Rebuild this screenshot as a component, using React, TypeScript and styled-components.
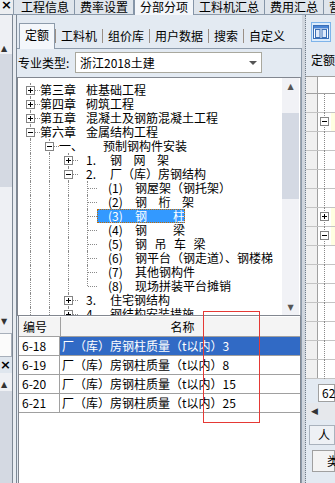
import styled, { createGlobalStyle } from 'styled-components';

const GlobalStyle = createGlobalStyle`
  html, body {
    margin: 0;
    padding: 0;
  }
  body {
    font-family: 'Noto Sans CJK SC', 'Noto Sans', sans-serif;
    font-size: 12px;
    color: #000;
  }
`;

type TreeItem = {
  level: number;
  box?: 'plus' | 'minus';
  num: string;
  text: string;
  gap?: number;
  last?: boolean;
  selected?: boolean;
};

const TREE: TreeItem[] = [
  { level: 1, box: 'plus', num: '第三章', text: '桩基础工程' },
  { level: 1, box: 'plus', num: '第四章', text: '砌筑工程' },
  { level: 1, box: 'plus', num: '第五章', text: '混凝土及钢筋混凝土工程' },
  { level: 1, box: 'minus', num: '第六章', text: '金属结构工程' },
  { level: 2, box: 'minus', num: '一、', text: '预制钢构件安装' },
  { level: 3, box: 'plus', num: '1.', text: '钢网架', gap: 11.5 },
  { level: 3, box: 'minus', num: '2.', text: '厂（库）房钢结构' },
  { level: 4, num: '(1)', text: '钢屋架（钢托架）' },
  { level: 4, num: '(2)', text: '钢桁架', gap: 11.5 },
  { level: 4, num: '(3)', text: '钢柱', gap: 26, selected: true },
  { level: 4, num: '(4)', text: '钢梁', gap: 26 },
  { level: 4, num: '(5)', text: '钢吊车梁', gap: 7.5 },
  { level: 4, num: '(6)', text: '钢平台（钢走道）、钢楼梯' },
  { level: 4, num: '(7)', text: '其他钢构件' },
  { level: 4, num: '(8)', text: '现场拼装平台摊销', last: true },
  { level: 3, box: 'plus', num: '3.', text: '住宅钢结构' },
  { level: 3, box: 'plus', num: '4.', text: '钢结构安装措施' },
];

// where the number and the title start, per level (relative to the label box)
const NUM_PAD: Record<number, number> = { 1: 0, 2: 0, 3: 8, 4: 11 };
const NUM_WIDTH: Record<number, number> = { 1: 46, 2: 44, 3: 24, 4: 27 };

const ROWS = [
  { code: '6-18', name: '厂（库）房钢柱质量（t以内）3', selected: true },
  { code: '6-19', name: '厂（库）房钢柱质量（t以内）8' },
  { code: '6-20', name: '厂（库）房钢柱质量（t以内）15' },
  { code: '6-21', name: '厂（库）房钢柱质量（t以内）25' },
];

const TOP_TABS = ['工程信息', '费率设置', '分部分项', '工料机汇总', '费用汇总', '营'];
const INNER_TABS = ['定额', '工料机', '组价库', '用户数据', '搜索', '自定义'];

// right panel grid rows: what sits in the tree column
const SIDE_GRID: ('line' | 'plus' | 'minus')[] = [
  'line', 'minus', 'line', 'line', 'line', 'line', 'plus', 'minus',
  'line', 'line', 'line', 'line', 'line', 'line', 'line',
];

const Chars = ({ text, gap }: { text: string; gap?: number }) => {
  if (!gap) return <span>{text}</span>;
  return (
    <Spread $gap={gap}>
      {text.split('').map((c, i) => (
        <span key={i}>{c}</span>
      ))}
    </Spread>
  );
};

const PaneIcon = () => (
  <svg width="16" height="14" viewBox="0 0 16 14">
    <rect x="0.5" y="0.5" width="15" height="13" fill="#fff" stroke="#3b6fb6" />
    <rect x="1" y="1" width="14" height="2.5" fill="#4a86d6" />
    <rect x="2.5" y="4.5" width="4.5" height="8" fill="#dfeafa" stroke="#3b6fb6" />
    <rect x="9" y="4.5" width="4.5" height="8" fill="#dfeafa" stroke="#3b6fb6" />
  </svg>
);

export default function App() {
  return (
    <Screen>
      <GlobalStyle />
      <TopBar>
        <CornerClose>×</CornerClose>
        <TopTabs>
          {TOP_TABS.map((t) => (
            <TopTab key={t} $active={t === '分部分项'}>
              {t}
            </TopTab>
          ))}
        </TopTabs>
      </TopBar>

      <Workspace>
        <SideStrip>
          <StripBlank $h={29} />
          <StripArrow $h={10}>▲</StripArrow>
          <StripThumb $h={133} />
          <StripTrack $h={129} />
          <StripArrow $h={12}>▼</StripArrow>
          <StripBlank $h={5} />
          <StripBox />
          <StripHead>×</StripHead>
          <StripBlank $h={6} />
          <StripArrow $h={12}>▲</StripArrow>
          <StripThumb $h={120} />
        </SideStrip>
        <Splitter />

        <CenterPanel>
          <InnerTabs>
            {INNER_TABS.map((t) => (
              <InnerTab key={t} $active={t === '定额'}>
                {t}
              </InnerTab>
            ))}
          </InnerTabs>
          <ContentBox>
            <TypeRow>
              <TypeLabel>专业类型:</TypeLabel>
              <Combo>
                <span>浙江2018土建</span>
                <ComboArrow />
              </Combo>
            </TypeRow>

            <TreeBox>
              <TreeList>
                {TREE.map((n, i) => (
                  <TreeRow key={i}>
                    {Array.from({ length: n.level - 1 }).map((_, g) => (
                      <Guide key={g} />
                    ))}
                    <Joint $last={n.last}>
                      {n.box && <Expander $plus={n.box === 'plus'} />}
                    </Joint>
                    <Label $selected={n.selected} $pad={NUM_PAD[n.level]}>
                      <Num $w={NUM_WIDTH[n.level]}>{n.num}</Num>
                      <Chars text={n.text} gap={n.gap} />
                    </Label>
                  </TreeRow>
                ))}
              </TreeList>
              <VScroll>
                <ScrollArrow>▲</ScrollArrow>
                <ScrollTrack $h={18} />
                <ScrollThumb $h={86} />
                <ScrollTrack $h={100} />
                <ScrollArrow>▼</ScrollArrow>
              </VScroll>
            </TreeBox>

            <Table>
              <HeadRow>
                <HeadCell>编号</HeadCell>
                <HeadCell $center>名称</HeadCell>
              </HeadRow>
              {ROWS.map((r) => (
                <BodyRow key={r.code}>
                  <CodeCell>{r.code}</CodeCell>
                  <NameCell $selected={r.selected}>{r.name}</NameCell>
                </BodyRow>
              ))}
            </Table>
          </ContentBox>
        </CenterPanel>

        <RightSplitter />

        <RightPanel>
          <ToolRow>
            <ToolButton>
              <PaneIcon />
            </ToolButton>
          </ToolRow>
          <SideTitle>定额</SideTitle>
          <SideGrid>
            <SideHead>
              <RowHeadCell />
              <SideCell />
            </SideHead>
            {SIDE_GRID.map((kind, i) => (
              <SideRow key={i}>
                <RowHeadCell />
                <SideCell $mark={kind !== 'line'}>
                  <SideLine />
                  {kind !== 'line' && <SideExpander $plus={kind === 'plus'} />}
                </SideCell>
              </SideRow>
            ))}
          </SideGrid>
          <NumBox>62</NumBox>
          <HScroll>
            <span>◀</span>
          </HScroll>
          <SideButton>人</SideButton>
          <SideHeadCell>类</SideHeadCell>
        </RightPanel>
      </Workspace>

      <RedMark />
    </Screen>
  );
}

// ROOT
const Screen = styled.div`
  position: relative;
  width: 335px;
  height: 483px;
  overflow: hidden;
  display: flex;
  flex-direction: column;
  background-color: #dde4ec;
`;

// TOP TABS
const TopBar = styled.div`
  display: flex;
  height: 15px;
  flex-shrink: 0;
  border-bottom: 1px solid #8d9bab;
  box-sizing: border-box;
`;

const CornerClose = styled.div`
  width: 14px;
  flex-shrink: 0;
  font-family: 'DejaVu Sans', sans-serif;
  font-size: 13px;
  font-weight: bold;
  line-height: 9px;
  padding-left: 1px;
  box-sizing: border-box;
  background-color: #eceef1;
  border-right: 1px solid #8d9bab;
`;

const TopTabs = styled.div`
  display: flex;
  padding-left: 2px;
`;

const TopTab = styled.div<{ $active?: boolean }>`
  height: 14px;
  line-height: 14px;
  padding: 0 5px;
  white-space: nowrap;
  border-right: 1px solid #8595a8;
  background-color: ${(p) => (p.$active ? '#f3f6fa' : '#dfe5ec')};
  ${(p) => p.$active && 'height: 15px; border-left: 1px solid #8595a8;'}
`;

// LAYOUT
const Workspace = styled.div`
  flex: 1;
  min-height: 0;
  display: flex;
`;

// LEFT STRIP
const SideStrip = styled.div`
  width: 12px;
  flex-shrink: 0;
  display: flex;
  flex-direction: column;
  background-color: #eef0f4;
`;

const StripBlank = styled.div<{ $h: number }>`
  height: ${(p) => p.$h}px;
  flex-shrink: 0;
`;

const StripArrow = styled.div<{ $h: number }>`
  height: ${(p) => p.$h}px;
  flex-shrink: 0;
  font-size: 8px;
  line-height: ${(p) => p.$h}px;
  padding-left: 1px;
  color: #333;
  font-family: 'DejaVu Sans', sans-serif;
`;

const StripThumb = styled.div<{ $h: number }>`
  height: ${(p) => p.$h}px;
  flex-shrink: 0;
  background-color: #d4d9e2;
`;

const StripTrack = styled.div<{ $h: number }>`
  height: ${(p) => p.$h}px;
  flex-shrink: 0;
  background-color: #eef0f4;
`;

const StripBox = styled.div`
  height: 22px;
  flex-shrink: 0;
  background-color: #fbfbfb;
  border: 1px solid #a7afba;
  border-left: none;
`;

const StripHead = styled.div`
  height: 16px;
  flex-shrink: 0;
  font-family: 'DejaVu Sans', sans-serif;
  font-weight: bold;
  font-size: 13px;
  line-height: 16px;
  background-color: #dfe6ee;
`;

const Splitter = styled.div`
  width: 5px;
  flex-shrink: 0;
  border-left: 1px solid #7d8894;
  border-right: 1px solid #7d8894;
  box-sizing: border-box;
  background-color: #e8ecf1;
`;

// CENTER PANEL
const CenterPanel = styled.div`
  width: 285px;
  flex-shrink: 0;
  display: flex;
  flex-direction: column;
  background-color: #e3eaf2;
`;

const InnerTabs = styled.div`
  display: flex;
  align-items: flex-end;
  height: 33px;
  flex-shrink: 0;
  padding-left: 2px;
`;

const InnerTab = styled.div<{ $active?: boolean }>`
  white-space: nowrap;
  padding: 0 5px;
  height: ${(p) => (p.$active ? '26px' : '14px')};
  line-height: ${(p) => (p.$active ? '22px' : '14px')};
  box-sizing: border-box;
  margin-bottom: ${(p) => (p.$active ? '-1px' : '5px')};
  background-color: ${(p) => (p.$active ? '#f4f7fb' : 'transparent')};
  border: ${(p) => (p.$active ? '1px solid #8d9bab' : 'none')};
  border-bottom: none;
  position: relative;
  z-index: 1;
  & + & {
    border-left: ${(p) => (p.$active ? '1px solid #8d9bab' : '1px solid #9a8f86')};
  }
`;

const ContentBox = styled.div`
  flex: 1;
  min-height: 0;
  display: flex;
  flex-direction: column;
  border-top: 1px solid #8d9bab;
  border-right: 1px solid #8d9bab;
  background-color: #e3eaf2;
`;

const TypeRow = styled.div`
  display: flex;
  align-items: center;
  height: 21px;
  margin: 3px 0 4px 1px;
`;

const TypeLabel = styled.span`
  width: 57px;
  flex-shrink: 0;
`;

const Combo = styled.div`
  position: relative;
  width: 187px;
  height: 21px;
  box-sizing: border-box;
  border: 1px solid #a9a89e;
  background-color: #fff;
  padding-left: 4px;
  line-height: 19px;
`;

const ComboArrow = styled.span`
  position: absolute;
  right: 4px;
  top: 8px;
  width: 0;
  height: 0;
  border-left: 4px solid transparent;
  border-right: 4px solid transparent;
  border-top: 4px solid #555;
`;

// TREE
const TreeBox = styled.div`
  display: flex;
  height: 239px;
  flex-shrink: 0;
  background-color: #fff;
  border: 1px solid #828790;
  border-right-color: #a0a6ae;
  box-sizing: border-box;
  overflow: hidden;
`;

const TreeList = styled.div`
  flex: 1;
  padding: 5px 0 0 3px;
  overflow: hidden;
`;

const TreeRow = styled.div`
  display: flex;
  height: 14px;
  line-height: 14px;
  white-space: nowrap;
`;

const Guide = styled.span`
  position: relative;
  width: 19px;
  height: 14px;
  flex-shrink: 0;
  &::before {
    content: '';
    position: absolute;
    left: 9px;
    top: 0;
    height: 14px;
    border-left: 1px dotted #8a8a8a;
  }
`;

const Joint = styled.span<{ $last?: boolean }>`
  position: relative;
  width: 19px;
  height: 14px;
  flex-shrink: 0;
  &::before {
    content: '';
    position: absolute;
    left: 9px;
    top: 0;
    height: ${(p) => (p.$last ? '7px' : '14px')};
    border-left: 1px dotted #8a8a8a;
  }
  &::after {
    content: '';
    position: absolute;
    left: 10px;
    top: 7px;
    width: 9px;
    border-top: 1px dotted #8a8a8a;
  }
`;

const Expander = styled.span<{ $plus?: boolean }>`
  position: absolute;
  left: 5px;
  top: 3px;
  width: 9px;
  height: 9px;
  box-sizing: border-box;
  border: 1px solid #848484;
  background-color: #fff;
  z-index: 1;
  &::before {
    content: '';
    position: absolute;
    left: 1px;
    top: 3px;
    width: 5px;
    height: 1px;
    background-color: #000;
  }
  &::after {
    content: '';
    position: absolute;
    left: 3px;
    top: 1px;
    width: 1px;
    height: 5px;
    background-color: #000;
    display: ${(p) => (p.$plus ? 'block' : 'none')};
  }
`;

const Label = styled.span<{ $selected?: boolean; $pad: number }>`
  display: flex;
  padding-left: ${(p) => p.$pad}px;
  height: 14px;
  box-sizing: border-box;
  color: ${(p) => (p.$selected ? '#fff' : '#000')};
  background-color: ${(p) => (p.$selected ? '#3399ff' : 'transparent')};
  outline: ${(p) => (p.$selected ? '1px dotted #c36a00' : 'none')};
  outline-offset: -1px;
`;

const Num = styled.span<{ $w: number }>`
  display: inline-block;
  width: ${(p) => p.$w}px;
  flex-shrink: 0;
`;

const Spread = styled.span<{ $gap: number }>`
  display: flex;
  gap: ${(p) => p.$gap}px;
`;

const VScroll = styled.div`
  width: 17px;
  flex-shrink: 0;
  display: flex;
  flex-direction: column;
  background-color: #f1f2f6;
  margin-right: 1px;
`;

const ScrollArrow = styled.div`
  height: 17px;
  flex-shrink: 0;
  font-family: 'DejaVu Sans', sans-serif;
  font-size: 8px;
  line-height: 17px;
  text-align: center;
  color: #555;
`;

const ScrollTrack = styled.div<{ $h: number }>`
  height: ${(p) => p.$h}px;
  flex-shrink: 0;
  background-color: #f1f2f6;
`;

const ScrollThumb = styled.div<{ $h: number }>`
  height: ${(p) => p.$h}px;
  flex-shrink: 0;
  background-color: #d4d9e3;
`;

// TABLE
const Table = styled.div`
  flex: 1;
  margin-left: 1px;
  background-color: #fff;
  border-left: 1px solid #828790;
  border-right: 1px solid #828790;
`;

const HeadRow = styled.div`
  display: grid;
  grid-template-columns: 41px 1fr;
  height: 20px;
  margin-top: 1px;
  background-color: #f4f4f4;
  border-bottom: 1px solid #a0a0a0;
  box-sizing: border-box;
`;

const HeadCell = styled.div<{ $center?: boolean }>`
  line-height: 19px;
  padding-left: 4px;
  text-align: ${(p) => (p.$center ? 'center' : 'left')};
  & + & {
    border-left: 1px solid #a0a0a0;
  }
`;

const BodyRow = styled.div`
  display: grid;
  grid-template-columns: 41px 1fr;
  height: 19px;
  border-bottom: 1px solid #a0a0a0;
  box-sizing: border-box;
`;

const CodeCell = styled.div`
  line-height: 18px;
  padding-left: 3px;
  border-right: 1px solid #a0a0a0;
`;

const NameCell = styled.div<{ $selected?: boolean }>`
  line-height: 18px;
  padding-left: 2px;
  white-space: nowrap;
  color: ${(p) => (p.$selected ? '#fff' : '#000')};
  background-color: ${(p) => (p.$selected ? '#316ac5' : '#fff')};
`;

// RIGHT PANEL
const RightSplitter = styled.div`
  width: 4px;
  flex-shrink: 0;
  background-color: #d0d6de;
  border-right: 1px dotted #6f7b88;
  box-sizing: border-box;
`;

const RightPanel = styled.div`
  flex: 1;
  display: flex;
  flex-direction: column;
  background-color: #e3eaf2;
  overflow: hidden;
`;

const ToolRow = styled.div`
  display: flex;
  height: 32px;
  flex-shrink: 0;
  padding: 7px 0 0 5px;
  box-sizing: border-box;
`;

const ToolButton = styled.div`
  width: 20px;
  height: 20px;
  box-sizing: border-box;
  border: 1px solid #7eb4ea;
  background-color: #dcecfc;
  display: flex;
  align-items: center;
  justify-content: center;
`;

const SideTitle = styled.div`
  height: 29px;
  flex-shrink: 0;
  line-height: 26px;
  padding-left: 5px;
  white-space: nowrap;
`;

const SideGrid = styled.div`
  display: flex;
  flex-direction: column;
  flex-shrink: 0;
  border-top: 1px solid #a0a0a0;
`;

const SideHead = styled.div`
  display: flex;
  height: 16px;
  border-bottom: 1px solid #a0a0a0;
`;

const SideRow = styled.div`
  display: flex;
  height: 19px;
  box-sizing: border-box;
  border-bottom: 1px solid #c4c4c4;
`;

const RowHeadCell = styled.div`
  width: 11px;
  flex-shrink: 0;
  background-color: #f0f0f0;
  border-right: 1px solid #a0a0a0;
`;

const SideCell = styled.div<{ $mark?: boolean }>`
  position: relative;
  flex: 1;
  background: ${(p) => (p.$mark ? 'linear-gradient(to right, #fff 13px, #ffffe1 13px)' : '#fff')};
`;

const SideLine = styled.span`
  position: absolute;
  left: 6px;
  top: 0;
  bottom: -1px;
  border-left: 1px dotted #8a8a8a;
`;

const SideExpander = styled(Expander)`
  left: 2px;
  top: 4px;
`;

const NumBox = styled.div`
  margin: 5px 0 0 12px;
  height: 16px;
  flex-shrink: 0;
  line-height: 16px;
  padding-left: 3px;
  background-color: #fff;
  border: 1px solid #a0a0a0;
`;

const HScroll = styled.div`
  margin-top: 1px;
  height: 17px;
  flex-shrink: 0;
  line-height: 17px;
  padding-left: 5px;
  font-size: 9px;
  font-family: 'DejaVu Sans', sans-serif;
  color: #333;
  background-color: #e6e8ec;
`;

const SideButton = styled.div`
  margin: 5px 0 0 3px;
  height: 18px;
  flex-shrink: 0;
  line-height: 18px;
  padding-left: 8px;
  border: 1px solid #a9b2bd;
  background-color: #eef1f5;
`;

const SideHeadCell = styled.div`
  margin: 5px 0 0 6px;
  height: 20px;
  flex-shrink: 0;
  line-height: 20px;
  padding-left: 14px;
  background-color: #f4f4f4;
  border: 1px solid #a0a0a0;
`;

// OVERLAY
const RedMark = styled.div`
  position: absolute;
  left: 203px;
  top: 311px;
  width: 57px;
  height: 112px;
  box-sizing: border-box;
  border: 1px solid #e53935;
  pointer-events: none;
`;
